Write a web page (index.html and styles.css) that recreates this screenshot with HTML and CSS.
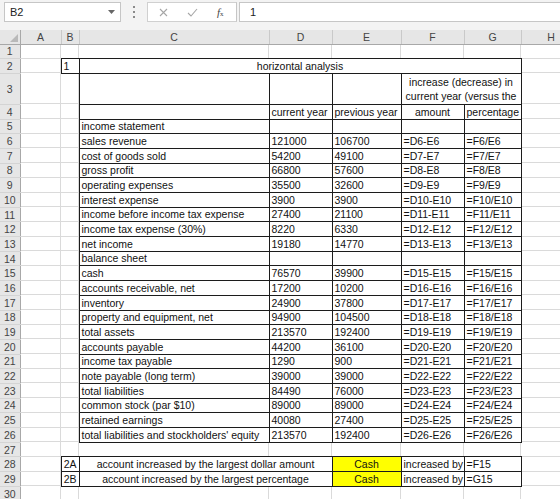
FILE: index.html
```html
<!DOCTYPE html>
<html>
  <head>
    <title>horizontal analysis</title>
    <link rel="stylesheet" href="styles.css">
  </head>
  <body>
    <!-- formula bar -->
    <div class="formula-bar">
      <div class="name-box">
        <span>B2</span>
        <svg width="7" height="4" viewBox="0 0 7 4"><path d="M0 0 L7 0 L3.5 4 Z" fill="#666"/></svg>
      </div>
      <div class="grip">
        <svg width="2" height="12" viewBox="0 0 2 12">
          <rect x="0" y="0" width="2" height="2" fill="#8a8a8a"/>
          <rect x="0" y="5" width="2" height="2" fill="#8a8a8a"/>
          <rect x="0" y="10" width="2" height="2" fill="#8a8a8a"/>
        </svg>
      </div>
      <div class="fx-box">
        <svg width="9" height="9" viewBox="0 0 9 9"><path d="M1 1 L8 8 M8 1 L1 8" stroke="#a6a6a6" stroke-width="1.1" fill="none"/></svg>
        <svg width="11" height="9" viewBox="0 0 11 9"><path d="M1 5 L4 8 L10 1" stroke="#a6a6a6" stroke-width="1.1" fill="none"/></svg>
        <span class="fx"><i>f</i><small>x</small></span>
      </div>
      <div class="formula-input">1</div>
    </div>

    <table class="sheet">
      <colgroup>
        <col class="c-rh">
        <col class="c-a">
        <col class="c-b">
        <col class="c-c">
        <col class="c-d">
        <col class="c-e">
        <col class="c-f">
        <col class="c-g">
        <col class="c-h">
      </colgroup>
      <thead>
        <tr class="head">
          <th class="corner"></th>
          <th>A</th><th>B</th><th>C</th><th>D</th><th>E</th><th>F</th><th>G</th><th>H</th>
        </tr>
      </thead>
      <tbody>
        <tr>
          <th class="rh">1</th>
          <td></td><td class="nb"></td><td class="nb"></td><td class="nb"></td><td class="nb"></td><td class="nb"></td><td class="nb"></td><td></td>
        </tr>
        <tr>
          <th class="rh">2</th>
          <td></td><td class="b">1</td><td class="b center" colspan="5">horizontal analysis</td><td></td>
        </tr>
        <tr class="tall">
          <th class="rh">3</th>
          <td></td><td></td><td class="b"></td><td class="b"></td><td class="b"></td>
          <td class="b center wrap" colspan="2">increase (decrease) in<br>current year (versus the</td><td></td>
        </tr>
        <tr>
          <th class="rh">4</th>
          <td></td><td></td><td class="b"></td><td class="b">current year</td><td class="b">previous year</td><td class="b center">amount</td><td class="b center">percentage</td><td></td>
        </tr>
        <tr>
          <th class="rh">5</th>
          <td></td><td></td><td class="b">income statement</td><td class="b"></td><td class="b"></td><td class="b"></td><td class="b"></td><td></td>
        </tr>
        <tr>
          <th class="rh">6</th>
          <td></td><td></td><td class="b">sales revenue</td><td class="b">121000</td><td class="b">106700</td><td class="b">=D6-E6</td><td class="b">=F6/E6</td><td></td>
        </tr>
        <tr>
          <th class="rh">7</th>
          <td></td><td></td><td class="b">cost of goods sold</td><td class="b">54200</td><td class="b">49100</td><td class="b">=D7-E7</td><td class="b">=F7/E7</td><td></td>
        </tr>
        <tr>
          <th class="rh">8</th>
          <td></td><td></td><td class="b">gross profit</td><td class="b">66800</td><td class="b">57600</td><td class="b">=D8-E8</td><td class="b">=F8/E8</td><td></td>
        </tr>
        <tr>
          <th class="rh">9</th>
          <td></td><td></td><td class="b">operating expenses</td><td class="b">35500</td><td class="b">32600</td><td class="b">=D9-E9</td><td class="b">=F9/E9</td><td></td>
        </tr>
        <tr>
          <th class="rh">10</th>
          <td></td><td></td><td class="b">interest expense</td><td class="b">3900</td><td class="b">3900</td><td class="b">=D10-E10</td><td class="b">=F10/E10</td><td></td>
        </tr>
        <tr>
          <th class="rh">11</th>
          <td></td><td></td><td class="b">income before income tax expense</td><td class="b">27400</td><td class="b">21100</td><td class="b">=D11-E11</td><td class="b">=F11/E11</td><td></td>
        </tr>
        <tr>
          <th class="rh">12</th>
          <td></td><td></td><td class="b">income tax expense (30%)</td><td class="b">8220</td><td class="b">6330</td><td class="b">=D12-E12</td><td class="b">=F12/E12</td><td></td>
        </tr>
        <tr>
          <th class="rh">13</th>
          <td></td><td></td><td class="b">net income</td><td class="b">19180</td><td class="b">14770</td><td class="b">=D13-E13</td><td class="b">=F13/E13</td><td></td>
        </tr>
        <tr>
          <th class="rh">14</th>
          <td></td><td></td><td class="b">balance sheet</td><td class="b"></td><td class="b"></td><td class="b"></td><td class="b"></td><td></td>
        </tr>
        <tr>
          <th class="rh">15</th>
          <td></td><td></td><td class="b">cash</td><td class="b">76570</td><td class="b">39900</td><td class="b">=D15-E15</td><td class="b">=F15/E15</td><td></td>
        </tr>
        <tr>
          <th class="rh">16</th>
          <td></td><td></td><td class="b">accounts receivable, net</td><td class="b">17200</td><td class="b">10200</td><td class="b">=D16-E16</td><td class="b">=F16/E16</td><td></td>
        </tr>
        <tr>
          <th class="rh">17</th>
          <td></td><td></td><td class="b">inventory</td><td class="b">24900</td><td class="b">37800</td><td class="b">=D17-E17</td><td class="b">=F17/E17</td><td></td>
        </tr>
        <tr>
          <th class="rh">18</th>
          <td></td><td></td><td class="b">property and equipment, net</td><td class="b">94900</td><td class="b">104500</td><td class="b">=D18-E18</td><td class="b">=F18/E18</td><td></td>
        </tr>
        <tr>
          <th class="rh">19</th>
          <td></td><td></td><td class="b">total assets</td><td class="b">213570</td><td class="b">192400</td><td class="b">=D19-E19</td><td class="b">=F19/E19</td><td></td>
        </tr>
        <tr>
          <th class="rh">20</th>
          <td></td><td></td><td class="b">accounts payable</td><td class="b">44200</td><td class="b">36100</td><td class="b">=D20-E20</td><td class="b">=F20/E20</td><td></td>
        </tr>
        <tr>
          <th class="rh">21</th>
          <td></td><td></td><td class="b">income tax payable</td><td class="b">1290</td><td class="b">900</td><td class="b">=D21-E21</td><td class="b">=F21/E21</td><td></td>
        </tr>
        <tr>
          <th class="rh">22</th>
          <td></td><td></td><td class="b">note payable (long term)</td><td class="b">39000</td><td class="b">39000</td><td class="b">=D22-E22</td><td class="b">=F22/E22</td><td></td>
        </tr>
        <tr>
          <th class="rh">23</th>
          <td></td><td></td><td class="b">total liabilities</td><td class="b">84490</td><td class="b">76000</td><td class="b">=D23-E23</td><td class="b">=F23/E23</td><td></td>
        </tr>
        <tr>
          <th class="rh">24</th>
          <td></td><td></td><td class="b">common stock (par $10)</td><td class="b">89000</td><td class="b">89000</td><td class="b">=D24-E24</td><td class="b">=F24/E24</td><td></td>
        </tr>
        <tr>
          <th class="rh">25</th>
          <td></td><td></td><td class="b">retained earnings</td><td class="b">40080</td><td class="b">27400</td><td class="b">=D25-E25</td><td class="b">=F25/E25</td><td></td>
        </tr>
        <tr>
          <th class="rh">26</th>
          <td></td><td></td><td class="b">total liabilities and stockholders' equity</td><td class="b">213570</td><td class="b">192400</td><td class="b">=D26-E26</td><td class="b">=F26/E26</td><td></td>
        </tr>
        <tr>
          <th class="rh">27</th>
          <td></td><td class="nb"></td><td class="nb"></td><td class="nb"></td><td class="nb"></td><td class="nb"></td><td class="nb"></td><td></td>
        </tr>
        <tr>
          <th class="rh">28</th>
          <td></td><td class="b right">2A</td><td class="b center" colspan="2">account increased by the largest dollar amount</td><td class="b center cash">Cash</td><td class="b">increased by</td><td class="b">=F15</td><td></td>
        </tr>
        <tr>
          <th class="rh">29</th>
          <td></td><td class="b right">2B</td><td class="b center" colspan="2">account increased by the largest percentage</td><td class="b center cash">Cash</td><td class="b">increased by</td><td class="b">=G15</td><td></td>
        </tr>
        <tr>
          <th class="rh">30</th>
          <td></td><td></td><td></td><td></td><td></td><td></td><td></td><td></td>
        </tr>
      </tbody>
    </table>
  </body>
</html>
```

FILE: styles.css
```css
body {
  margin: 0;
  width: 560px;
  height: 499px;
  overflow: hidden;
  background-color: #fff;
  font-family: "Liberation Sans", Arial, sans-serif;
  font-size: 10.5px;
  color: #111;
}

/* Formula bar */
.formula-bar {
  display: flex;
  align-items: flex-start;
  height: 30px;
  padding-top: 2px;
  box-sizing: border-box;
  background-color: #f3f3f3;
}

.name-box {
  display: flex;
  align-items: center;
  justify-content: space-between;
  margin-left: 4px;
  width: 117px;
  height: 20px;
  padding: 0 5px 0 5px;
  box-sizing: border-box;
  background-color: #fff;
  border: 1px solid #c6c6c6;
  font-size: 11px;
  color: #222;
}

.grip {
  display: flex;
  justify-content: center;
  align-items: center;
  width: 26px;
  height: 20px;
}

.fx-box {
  display: flex;
  align-items: center;
  gap: 19px;
  width: 90px;
  height: 20px;
  padding-left: 11px;
  box-sizing: border-box;
  background-color: #fff;
  border: 1px solid #d0d0d0;
  border-right: 1px solid #c6c6c6;
}

.fx {
  font-family: "Liberation Serif", serif;
  font-size: 11px;
  color: #444;
}

.fx small {
  font-size: 7px;
}

.formula-input {
  flex: 1;
  height: 20px;
  margin-left: 2px;
  padding-left: 10px;
  box-sizing: border-box;
  background-color: #fff;
  border: 1px solid #c6c6c6;
  border-right: none;
  line-height: 18px;
  font-size: 11px;
  color: #222;
}

/* Sheet grid */
.sheet {
  border-collapse: collapse;
  table-layout: fixed;
  width: 581px;
}

.c-rh { width: 20px; }
.c-a { width: 41px; }
.c-b { width: 18px; }
.c-c { width: 190px; }
.c-d { width: 63px; }
.c-e { width: 69px; }
.c-f { width: 63px; }
.c-g { width: 57px; }
.c-h { width: 60px; }

.sheet tr {
  height: 14.7px;
}

.sheet tr.head {
  height: 14px;
}

.sheet tr.tall {
  height: 31px;
}

.sheet th {
  padding: 0;
  font-weight: normal;
  color: #444;
  background-color: #e6e6e6;
  line-height: 12px;
}

.head th {
  border-right: 1px solid #c9c9c9;
  border-bottom: 1px solid #a8a8a8;
  text-align: center;
}

.head th.corner {
  position: relative;
  border-right: 1px solid #a8a8a8;
}

.corner::after {
  content: "";
  position: absolute;
  right: 2px;
  bottom: 2px;
  border-left: 8px solid transparent;
  border-bottom: 8px solid #b9b9b9;
}

th.rh {
  text-align: center;
  border-right: 1px solid #a8a8a8;
  border-bottom: 1px solid #d4d4d4;
}

.sheet td {
  padding: 0 2px;
  line-height: 13px;
  vertical-align: bottom;
  white-space: nowrap;
  overflow: hidden;
  box-shadow: inset -1px -1px 0 #dadada; /* gridlines */
}

.sheet td.nb {
  box-shadow: inset -1px 0 0 #dadada;
}

.sheet td.b {
  border: 1px solid #1c1c1c;
  box-shadow: none;
}

.center {
  text-align: center;
}

.right {
  text-align: right;
}

.sheet td.wrap {
  white-space: normal;
  line-height: 14.5px;
}

.sheet td.cash {
  background-color: #ffff00;
}
```
